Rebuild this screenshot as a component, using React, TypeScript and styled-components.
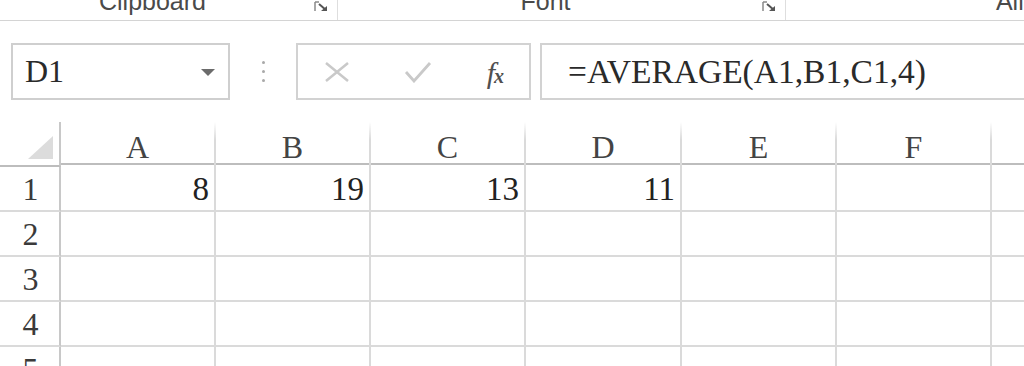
import React from "react";
import styled, { createGlobalStyle } from "styled-components";

const GlobalStyle = createGlobalStyle`
  html, body {
    margin: 0;
    padding: 0;
    background: #fff;
  }
  body {
    width: 1024px;
    height: 366px;
    overflow: hidden;
  }
`;

const serif = `"Liberation Serif", "Times New Roman", serif`;

const columns = ["A", "B", "C", "D", "E", "F", "G"];
const values: Array<Array<string>> = [
  ["8", "19", "13", "11", "", "", ""],
  ["", "", "", "", "", "", ""],
  ["", "", "", "", "", "", ""],
  ["", "", "", "", "", "", ""],
  ["", "", "", "", "", "", ""],
];

const ribbonGroups = [
  { label: "Clipboard", width: 338, launcher: true },
  { label: "Font", width: 448, launcher: true },
  { label: "Alignment", width: 539, launcher: false },
];

const Launcher = () => (
  <LauncherIcon width="17" height="12" viewBox="0 0 17 12">
    <path d="M2 1v9M2 1h4" stroke="#8a8a8a" strokeWidth="1.5" fill="none" />
    <path d="M6 3l7 6" stroke="#555" strokeWidth="2" />
    <path d="M8 10h6V5z" fill="#555" />
  </LauncherIcon>
);

const App = () => {
  return (
    <>
      <GlobalStyle />
      <Page>
        <RibbonStrip>
          {ribbonGroups.map((g) => (
            <RibbonGroup key={g.label} width={g.width} separated={g.launcher}>
              <GroupLabel>{g.label}</GroupLabel>
              {g.launcher && <Launcher />}
            </RibbonGroup>
          ))}
        </RibbonStrip>

        <FormulaBar>
          <NameBox>
            <NameText>D1</NameText>
            <DropArrow />
          </NameBox>
          <Grip>
            <Dot />
            <Dot />
            <Dot />
          </Grip>
          <FxBox>
            <svg width="26" height="22" viewBox="0 0 26 22">
              <path d="M2 2l22 18M24 2L2 20" stroke="#c9c9c9" strokeWidth="2.5" />
            </svg>
            <svg width="28" height="22" viewBox="0 0 28 22">
              <path d="M2 11l8 9L26 2" stroke="#c9c9c9" strokeWidth="2.8" fill="none" />
            </svg>
            <FxGlyph>
              f<small>x</small>
            </FxGlyph>
          </FxBox>
          <FormulaInput>=AVERAGE(A1,B1,C1,4)</FormulaInput>
        </FormulaBar>

        <Sheet>
          <CornerCell>
            <SelectAll />
          </CornerCell>
          {columns.map((c) => (
            <ColHeader key={c}>{c}</ColHeader>
          ))}
          {values.map((row, r) => (
            <React.Fragment key={r}>
              <RowHeader>{r + 1}</RowHeader>
              {row.map((v, i) => (
                <Cell key={i}>{v}</Cell>
              ))}
            </React.Fragment>
          ))}
        </Sheet>
      </Page>
    </>
  );
};

export default App;

const Page = styled.div`
  width: 1024px;
  height: 366px;
  overflow: hidden;
  background: #fff;
`;

const RibbonStrip = styled.div`
  display: flex;
  height: 20px;
  border-bottom: 1px solid #d4d4d4;
  overflow: hidden;
`;

const RibbonGroup = styled.div<{ width: number; separated: boolean }>`
  flex: 0 0 ${({ width }) => width}px;
  display: flex;
  align-items: flex-start;
  height: 20px;
  border-right: ${({ separated }) => (separated ? "1px solid #dedede" : "none")};
  box-sizing: border-box;
`;

const GroupLabel = styled.div`
  flex: 1;
  text-align: center;
  padding-right: 8px;
  margin-top: -11px;
  font-family: "Liberation Sans", Arial, sans-serif;
  font-size: 25px;
  line-height: 25px;
  color: #4a4a4a;
  white-space: nowrap;
`;

const LauncherIcon = styled.svg`
  flex: 0 0 17px;
  margin: 1px 7px 0 0;
`;

const FormulaBar = styled.div`
  display: flex;
  align-items: center;
  height: 101px;
  padding: 0 0 0 11px;
  box-sizing: border-box;
`;

const NameBox = styled.div`
  flex: 0 0 219px;
  height: 57px;
  box-sizing: border-box;
  border: 2px solid #cfcfcf;
  display: flex;
  align-items: center;
  justify-content: space-between;
  padding: 0 13px 0 12px;
`;

const NameText = styled.span`
  font-family: ${serif};
  font-size: 32px;
  color: #2a2a2a;
`;

const DropArrow = styled.span`
  width: 0;
  height: 0;
  border-left: 7px solid transparent;
  border-right: 7px solid transparent;
  border-top: 7px solid #6b6b6b;
  margin-top: 2px;
`;

const Grip = styled.div`
  flex: 0 0 66px;
  display: flex;
  flex-direction: column;
  align-items: center;
  gap: 6px;
`;

const Dot = styled.span`
  width: 3px;
  height: 3px;
  border-radius: 50%;
  background: #a9a9a9;
`;

const FxBox = styled.div`
  flex: 0 0 235px;
  height: 57px;
  box-sizing: border-box;
  border: 2px solid #d2d2d2;
  display: flex;
  align-items: center;
  padding: 0 26px 0 26px;
  justify-content: space-between;
`;

const FxGlyph = styled.span`
  font-family: ${serif};
  font-style: italic;
  font-size: 30px;
  color: #505050;
  line-height: 1;
  margin-top: 2px;
  letter-spacing: -1px;

  small {
    font-size: 20px;
    font-weight: bold;
  }
`;

const FormulaInput = styled.div`
  flex: 1;
  margin-left: 9px;
  margin-right: -10px;
  height: 57px;
  box-sizing: border-box;
  border: 2px solid #d2d2d2;
  display: flex;
  align-items: center;
  padding-left: 26px;
  font-family: ${serif};
  font-size: 33.5px;
  color: #2a2a2a;
  white-space: nowrap;
`;

const Sheet = styled.div`
  display: grid;
  grid-template-columns: 61px 155px 155px 155px 156px 155px 155px 200px;
  grid-auto-rows: 45px;
`;

const CornerCell = styled.div`
  border-right: 2px solid #c8c8c8;
  border-bottom: 2px solid #bdbdbd;
  box-sizing: border-box;
  display: flex;
  align-items: flex-end;
  justify-content: flex-end;
  padding: 0 6px 6px 0;
`;

const SelectAll = styled.span`
  width: 0;
  height: 0;
  border-left: 25px solid transparent;
  border-bottom: 23px solid #dcdcdc;
`;

const ColHeader = styled.div`
  box-sizing: border-box;
  border-bottom: 2px solid #bdbdbd;
  border-right: 2px solid transparent;
  border-image: linear-gradient(to bottom, rgba(218, 218, 218, 0), #dadada 40%) 0 2 0 0;
  border-image-width: 0 2px 0 0;
  text-align: center;
  font-family: ${serif};
  font-size: 32px;
  line-height: 45px;
  padding-top: 3px;
  color: #444;
  box-shadow: inset 0 -2px 0 #bdbdbd;
`;

const RowHeader = styled.div`
  box-sizing: border-box;
  border-right: 2px solid #c8c8c8;
  border-bottom: 2px solid #dadada;
  text-align: center;
  padding-left: 2px;
  font-family: ${serif};
  font-size: 32px;
  line-height: 45px;
  color: #3a3a3a;
`;

const Cell = styled.div`
  box-sizing: border-box;
  border-right: 2px solid #dadada;
  border-bottom: 2px solid #dadada;
  text-align: right;
  padding-right: 5px;
  font-family: ${serif};
  font-size: 33px;
  line-height: 45px;
  color: #222;
`;
